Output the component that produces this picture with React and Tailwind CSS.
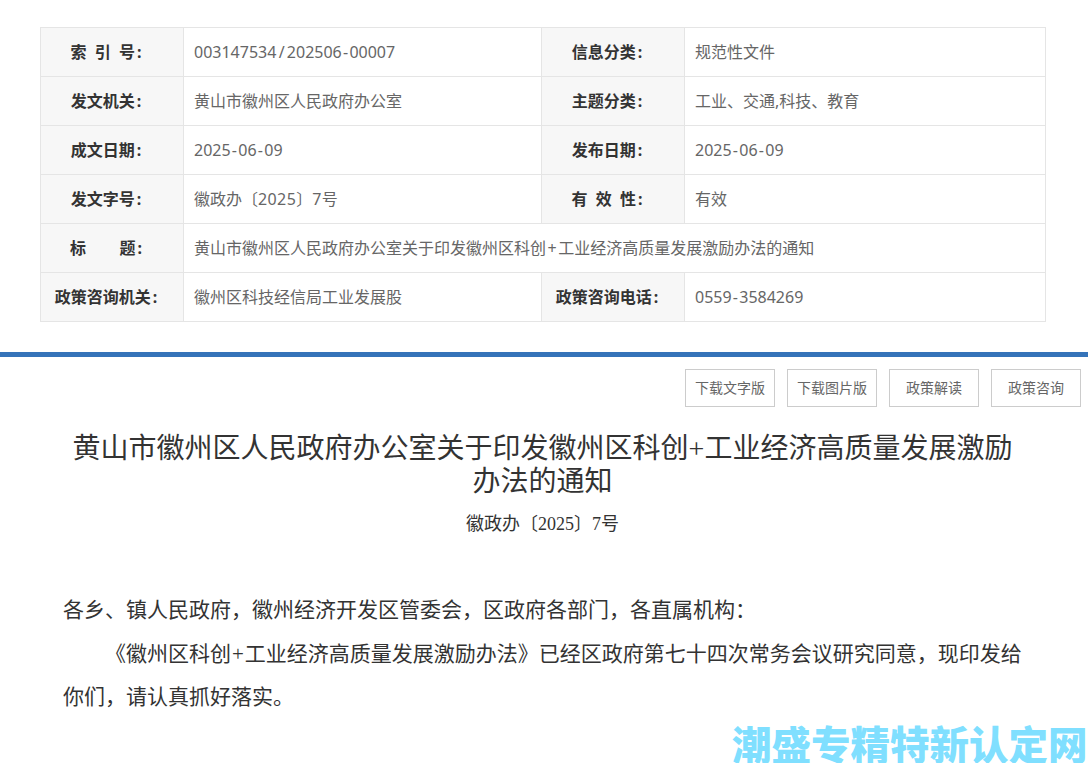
const sans = "font-['Noto_Sans','Noto_Sans_CJK_SC',sans-serif]";

function Label({ children, colSpan }) {
  return (
    <td colSpan={colSpan} className="border border-[#e5e5e5] bg-[#f7f7f7] h-[49px] py-0 pl-0 pr-[11px] text-center text-[16px] font-bold text-[#333] whitespace-pre">
      {children}
      <span className="pl-[2px] pr-[1px]">:</span>
    </td>
  );
}

function Value({ children, colSpan }) {
  return (
    <td colSpan={colSpan} className="border border-[#e5e5e5] h-[49px] py-0 pl-[10px] pr-0 text-[16px] text-[#666]">
      {children}
    </td>
  );
}

function Hy() {
  return <span className="px-[1.25px]">-</span>;
}

function Btn({ children }) {
  return (
    <div className="w-[90px] h-[38px] pb-[1px] border border-[#ccc] flex items-center justify-center text-[14px] text-[#666]">
      {children}
    </div>
  );
}

export default function App() {
  return (
    <div className={`relative w-[1088px] h-[763px] overflow-hidden bg-white ${sans}`}>
      <div className="pt-[27px] pl-[40px]">
        <table className="border-collapse table-fixed w-[1005px]">
          <colgroup>
            <col className="w-[143px]" />
            <col className="w-[358px]" />
            <col className="w-[143px]" />
            <col className="w-[361px]" />
          </colgroup>
          <tbody>
            <tr>
              <Label>索  引  号</Label>
              <Value>003147534<span className="px-[2.25px]">/</span>202506<Hy />00007</Value>
              <Label>信息分类</Label>
              <Value>规范性文件</Value>
            </tr>
            <tr>
              <Label>发文机关</Label>
              <Value>黄山市徽州区人民政府办公室</Value>
              <Label>主题分类</Label>
              <Value>工业、交通,科技、教育</Value>
            </tr>
            <tr>
              <Label>成文日期</Label>
              <Value>2025<Hy />06<Hy />09</Value>
              <Label>发布日期</Label>
              <Value>2025<Hy />06<Hy />09</Value>
            </tr>
            <tr>
              <Label>发文字号</Label>
              <Value>徽政办〔<span className="tracking-[0.4px]">2025</span>〕<span className="tracking-[0.4px]">7</span>号</Value>
              <Label>有  效  性</Label>
              <Value>有效</Value>
            </tr>
            <tr>
              <Label>标        题</Label>
              <Value colSpan={3}>黄山市徽州区人民政府办公室关于印发徽州区科创<span className="px-[1.5px]">+</span>工业经济高质量发展激励办法的通知</Value>
            </tr>
            <tr>
              <Label>政策咨询机关</Label>
              <Value>徽州区科技经信局工业发展股</Value>
              <Label>政策咨询电话</Label>
              <Value>0559<Hy />3584269</Value>
            </tr>
          </tbody>
        </table>
      </div>

      <div className="mt-[30px] h-[5px] bg-[#3573b9]" />

      <div className="mt-[12px] flex justify-end gap-[12px] pr-[7px]">
        <Btn>下载文字版</Btn>
        <Btn>下载图片版</Btn>
        <Btn>政策解读</Btn>
        <Btn>政策咨询</Btn>
      </div>

      <div className="font-['Liberation_Serif','Noto_Sans_CJK_SC',serif]">
        <h1 className="mt-[25px] ml-[62px] w-[961px] text-center text-[28px] leading-[33px] font-normal text-[#333]">
          黄山市徽州区人民政府办公室关于印发徽州区科创+工业经济高质量发展激励办法的通知
        </h1>
        <div className="mt-[10px] ml-[62px] w-[961px] text-center text-[18px] leading-[32px] text-[#333]">徽政办〔2025〕7号</div>
        <div className="mt-[49px] pl-[63px] pr-[63px] text-[21px] leading-[43.5px] text-[#333]">
          <p>各乡、镇人民政府，徽州经济开发区管委会，区政府各部门，各直属机构：</p>
          <p className="indent-[42px]">《徽州区科创<span className="px-[1px]">+</span>工业经济高质量发展激励办法》已经区政府第七十四次常务会议研究同意，现印发给你们，请认真抓好落实。</p>
        </div>
      </div>

      <div className="absolute right-0 bottom-0 w-[356px] text-[39.5px] leading-[40px] font-black text-[#80dfff] whitespace-nowrap font-['Noto_Sans_CJK_SC',sans-serif]">
        潮盛专精特新认定网
      </div>
    </div>
  );
}
